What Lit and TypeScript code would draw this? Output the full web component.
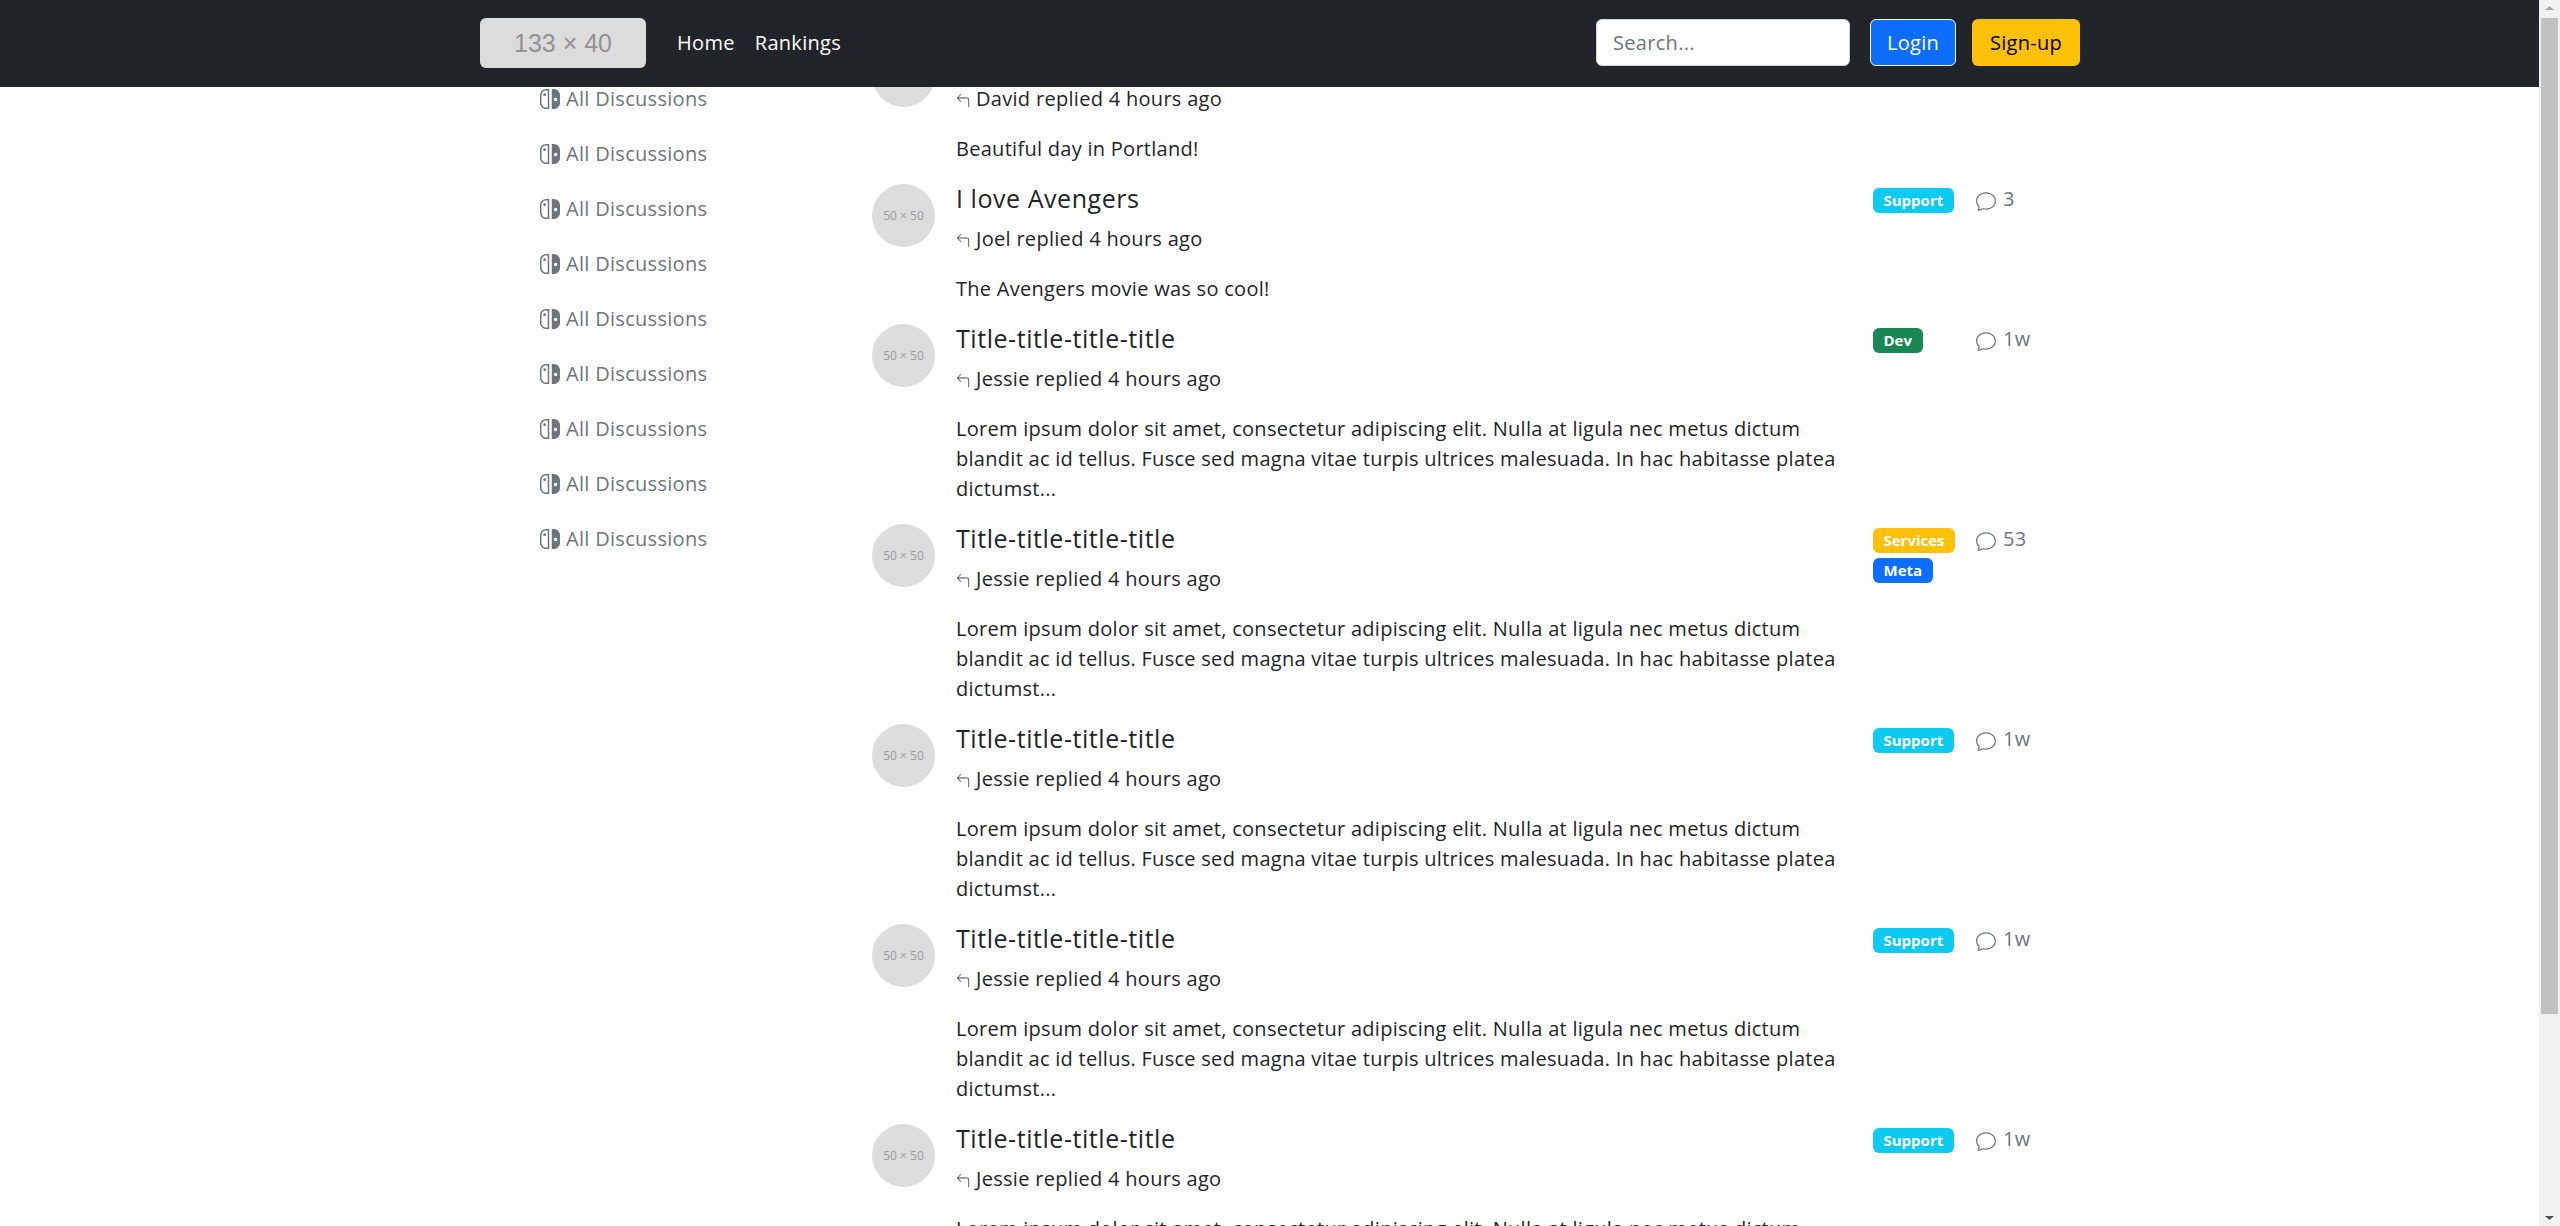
import { LitElement, css, html, svg } from "lit";
import { customElement } from "lit/decorators.js";

const LOREM =
  "Lorem ipsum dolor sit amet, consectetur adipiscing elit. Nulla at ligula nec metus dictum blandit ac id tellus. Fusce sed magna vitae turpis ultrices malesuada. In hac habitasse platea dictumst...";

type Tag = { label: string; tone: string };
type Topic = { title: string; who: string; text: string; tags: Tag[]; stat: string };

const SUPPORT = { label: "Support", tone: "info" };

const TOPICS: Topic[] = [
  { title: "Hello Portland", who: "David", text: "Beautiful day in Portland!", tags: [], stat: "" },
  { title: "I love Avengers", who: "Joel", text: "The Avengers movie was so cool!", tags: [SUPPORT], stat: "3" },
  { title: "Title-title-title-title", who: "Jessie", text: LOREM, tags: [{ label: "Dev", tone: "success" }], stat: "1w" },
  {
    title: "Title-title-title-title",
    who: "Jessie",
    text: LOREM,
    tags: [
      { label: "Services", tone: "warning" },
      { label: "Meta", tone: "primary" },
    ],
    stat: "53",
  },
  { title: "Title-title-title-title", who: "Jessie", text: LOREM, tags: [SUPPORT], stat: "1w" },
  { title: "Title-title-title-title", who: "Jessie", text: LOREM, tags: [SUPPORT], stat: "1w" },
  { title: "Title-title-title-title", who: "Jessie", text: LOREM, tags: [SUPPORT], stat: "1w" },
];

const switchIcon = svg`<svg class="switch" viewBox="0 0 16 16" fill="currentColor">
  <path d="M9.4 0h1.600C13.700 0 16 2.200 16 5v6c0 2.800-2.300 5-5 5H9.400V0Zm3.100 7a1.400 1.400 0 1 0 0 2.800 1.400 1.400 0 0 0 0-2.800Z" fill-rule="evenodd"/>
  <path d="M5 0h2.400v16H5C2.300 16 0 13.800 0 11V5C0 2.200 2.300 0 5 0Zm0 1.200C2.900 1.200 1.200 2.900 1.200 5v6c0 2.100 1.700 3.800 3.800 3.800h1.200V1.200H5ZM3.700 3.400a1.100 1.100 0 1 1 0 2.200 1.100 1.100 0 0 1 0-2.200Z" fill-rule="evenodd"/>
</svg>`;

const replyIcon = svg`<svg class="reply" viewBox="0 0 16 16" fill="currentColor">
  <path fill-rule="evenodd" d="M1.146 4.854a.5.5 0 0 1 0-.708l4-4a.5.5 0 1 1 .708.708L2.707 4H12.500A2.500 2.500 0 0 1 15 6.500v8a.5.5 0 0 1-1 0v-8A1.500 1.500 0 0 0 12.500 5H2.707l3.147 3.146a.5.5 0 1 1-.708.708l-4-4z"/>
</svg>`;

const chatIcon = svg`<svg class="chat" viewBox="0 0 16 16" fill="currentColor">
  <path d="M2.678 11.894a1 1 0 0 1 .287.801 10.970 10.970 0 0 1-.398 2c1.395-.323 2.247-.697 2.634-.893a1 1 0 0 1 .71-.074A8.060 8.060 0 0 0 8 14c3.996 0 7-2.807 7-6 0-3.192-3.004-6-7-6S1 4.808 1 8c0 1.468.617 2.830 1.678 3.894zm-.493 3.905a21.682 21.682 0 0 1-.713.129c-.2.032-.352-.176-.273-.362a9.680 9.680 0 0 0 .244-.637l.003-.01c.248-.72.45-1.548.524-2.319C.743 11.370 0 9.760 0 8c0-3.866 3.582-7 8-7s8 3.134 8 7-3.582 7-8 7a9.060 9.060 0 0 1-2.347-.306c-.52.263-1.639.742-3.468 1.105z"/>
</svg>`;

@customElement("app-root")
export class AppRoot extends LitElement {
  static styles = css`
    :host {
      display: flex;
      height: 100vh;
      overflow: hidden;
      background: #fff;
      color: #212529;
      font-family: "Open Sans", "Noto Sans", sans-serif;
      font-size: 20px;
      letter-spacing: 0.3px;
      line-height: 30px;
    }

    .page {
      flex: 1;
      min-width: 0;
      display: flex;
      flex-direction: column;
    }

    .navbar {
      flex: none;
      height: 87px;
      box-sizing: border-box;
      padding: 0 459px 2px 480px;
      background: #212529;
      display: flex;
      align-items: center;
      position: relative;
      z-index: 1;
    }
    .logo {
      width: 166px;
      height: 50px;
      border-radius: 6px;
      background: #dcdcdc;
      color: #929292;
      font: 25px/50px "Liberation Sans", sans-serif;
      letter-spacing: 0;
      text-align: center;
    }
    .links {
      display: flex;
      gap: 20px;
      margin-left: 31px;
    }
    .links a {
      color: #fff;
    }
    .tools {
      margin-left: auto;
      display: flex;
      align-items: center;
      gap: 16px;
    }
    .search {
      width: 254px;
      height: 47px;
      box-sizing: border-box;
      padding: 0 16px;
      margin-right: 4px;
      background: #fff;
      border: 1px solid #ced4da;
      border-radius: 6px;
      color: #6c757d;
      line-height: 45px;
    }
    .btn {
      height: 47px;
      box-sizing: border-box;
      border-radius: 6px;
      border: 1px solid transparent;
      line-height: 45px;
      text-align: center;
    }
    .btn.login {
      width: 86px;
      background: #0d6efd;
      border-color: #f8f9fa;
      color: #fff;
    }
    .btn.signup {
      width: 108px;
      background: #ffc107;
      color: #000;
    }

    .body {
      flex: 1;
      min-height: 0;
      overflow: hidden;
      display: flex;
      align-items: flex-start;
      padding-left: 540px;
    }

    .sidebar {
      width: 332px;
      flex: none;
      margin-top: -16px;
      color: #6c757d;
    }
    .sidebar a {
      height: 55px;
      display: flex;
      align-items: center;
      gap: 6px;
    }
    .switch {
      width: 20px;
      height: 20px;
      flex: none;
    }

    .feed {
      flex: 1;
      min-width: 0;
      margin-top: -43px;
      padding-right: 445px;
    }
    .topic {
      display: grid;
      grid-template-columns: 63px 1fr 103px 118px;
      padding-bottom: 20px;
    }
    .avatar {
      width: 63px;
      height: 63px;
      border-radius: 50%;
      background: #dcdcdc;
      color: #999;
      font-size: 12px;
      letter-spacing: 0;
      line-height: 63px;
      text-align: center;
    }
    .main {
      margin-left: 21px;
      margin-right: 32px;
    }
    .title {
      margin: 0;
      font-size: 25px;
      font-weight: 400;
      letter-spacing: 0.55px;
      line-height: 28px;
    }
    .meta {
      margin: 12px 0 20px;
      display: flex;
      align-items: center;
      gap: 6px;
    }
    .reply {
      width: 14px;
      height: 14px;
      flex: none;
      margin-top: 4px;
      color: #495057;
    }
    .text {
      margin: 0;
      letter-spacing: 0.28px;
    }
    .tags {
      display: flex;
      flex-direction: column;
      align-items: flex-start;
      gap: 5px;
      padding-top: 4px;
    }
    .tag {
      height: 25px;
      box-sizing: border-box;
      padding: 0 10.5px;
      border-radius: 6px;
      color: #fff;
      font-size: 15px;
      font-weight: 700;
      letter-spacing: 0;
      line-height: 25px;
    }
    .info {
      background: #0dcaf0;
    }
    .success {
      background: #198754;
    }
    .warning {
      background: #ffc107;
    }
    .primary {
      background: #0d6efd;
    }
    .stat {
      display: flex;
      gap: 7px;
      color: #6c757d;
      white-space: nowrap;
    }
    .chat {
      width: 20px;
      height: 20px;
      flex: none;
      margin-top: 7px;
    }

    .scrollbar {
      flex: none;
      width: 21px;
      box-sizing: border-box;
      padding: 0 2px;
      background: #f1f1f1;
      display: flex;
      flex-direction: column;
      align-items: center;
    }
    .arrow {
      flex: none;
      height: 18px;
      width: 100%;
    }
    .arrow svg {
      display: block;
      width: 100%;
      height: 100%;
    }
    .thumb {
      flex: none;
      width: 100%;
      height: 996px;
      background: #c1c1c1;
    }
    .rest {
      flex: 1;
    }
  `;

  render() {
    return html`
      <div class="page">
        <header class="navbar">
          <div class="logo">133 × 40</div>
          <nav class="links">
            <a>Home</a>
            <a>Rankings</a>
          </nav>
          <div class="tools">
            <div class="search">Search...</div>
            <div class="btn login">Login</div>
            <div class="btn signup">Sign-up</div>
          </div>
        </header>
        <div class="body">
          <aside class="sidebar">
            ${Array.from({ length: 9 }, () => html`<a>${switchIcon}<span>All Discussions</span></a>`)}
          </aside>
          <main class="feed">
            ${TOPICS.map((topic) => this.renderTopic(topic))}
          </main>
        </div>
      </div>
      <div class="scrollbar" aria-hidden="true">
        <div class="arrow">
          <svg viewBox="0 0 17 18"><path d="M8.500 6 L13 10 H4 Z" fill="#a3a3a3"/></svg>
        </div>
        <div class="thumb"></div>
        <div class="rest"></div>
        <div class="arrow">
          <svg viewBox="0 0 17 18"><path d="M4 8 H13 L8.500 12 Z" fill="#505050"/></svg>
        </div>
      </div>
    `;
  }

  renderTopic(topic: Topic) {
    return html`
      <article class="topic">
        <div class="avatar">50 × 50</div>
        <div class="main">
          <h5 class="title">${topic.title}</h5>
          <div class="meta">${replyIcon}<span>${topic.who} replied 4 hours ago</span></div>
          <p class="text">${topic.text}</p>
        </div>
        <div class="tags">
          ${topic.tags.map((tag) => html`<span class="tag ${tag.tone}">${tag.label}</span>`)}
        </div>
        <div class="stat">${topic.stat ? html`${chatIcon}<span>${topic.stat}</span>` : ""}</div>
      </article>
    `;
  }
}
